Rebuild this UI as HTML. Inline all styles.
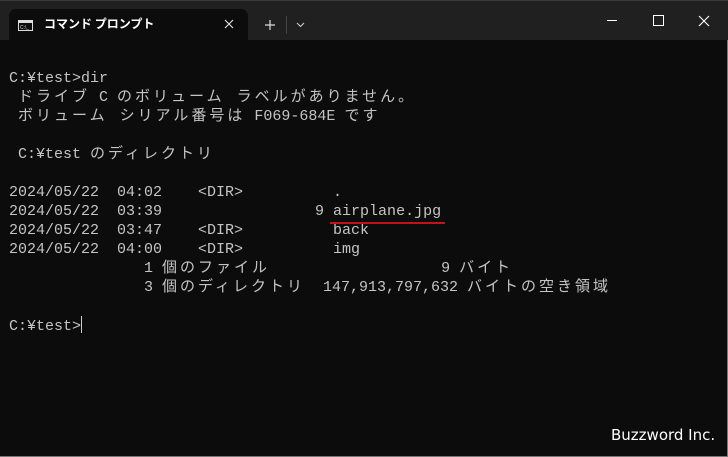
<!DOCTYPE html>
<html><head><meta charset="utf-8"><style>
body{margin:0;width:728px;height:457px;overflow:hidden;background:#202020;position:relative;font-family:"Liberation Sans","Noto Sans CJK JP",sans-serif}
.tb{position:absolute;left:0;top:0;width:728px;height:40px;background:#202020;border-top:1px solid #3a3a3a}
.tab{position:absolute;left:9px;top:9px;width:239px;height:31px;background:#0c0c0c;border-radius:7px 7px 0 0}
.body{position:absolute;left:0;top:40px;width:727px;height:416px;background:#0c0c0c;border-right:1px solid #777;border-bottom:1px solid #777}
pre{position:absolute;left:9px;top:69px;margin:0;font-family:"Liberation Mono","Noto Sans CJK JP",monospace;font-size:15px;line-height:19px;color:#c4c4c4}
.j{letter-spacing:3px}
.w{color:#fff;position:absolute}
</style></head><body>
<div class="tb"></div>
<div class="tab">
<svg style="position:absolute;left:9px;top:11px" width="15" height="11"><rect x="0.5" y="0.5" width="14" height="10" fill="none" stroke="#ddd"/><rect x="1" y="1" width="13" height="2" fill="#ddd"/><text x="2" y="9" font-size="5" fill="#ddd" font-family="Liberation Sans">C:\_</text></svg>
<div class="w" style="left:35px;top:8px;font-size:12px;font-weight:bold;font-family:'Noto Sans CJK JP',sans-serif;line-height:14px">コマンド プロンプト</div>
<svg style="position:absolute;left:215px;top:10px" width="10" height="10"><path d="M1 1L9 9M9 1L1 9" stroke="#ddd" stroke-width="1.2"/></svg>
</div>
<svg style="position:absolute;left:264px;top:19px" width="12" height="12"><path d="M6 1V11M1 6H11" stroke="#ddd" stroke-width="1.2"/></svg>
<div style="position:absolute;left:286px;top:16px;width:1px;height:18px;background:#444"></div>
<svg style="position:absolute;left:296px;top:22px" width="9" height="6"><path d="M1 1L4.5 4.5L8 1" stroke="#ccc" fill="none" stroke-width="1.1"/></svg>
<div style="position:absolute;left:607px;top:20px;width:10px;height:1px;background:#fff"></div>
<div style="position:absolute;left:653px;top:15px;width:9px;height:9px;border:1px solid #fff"></div>
<svg style="position:absolute;left:698px;top:15px" width="12" height="12"><path d="M1 1L11 11M11 1L1 11" stroke="#fff" stroke-width="1.1"/></svg>
<div class="body"></div>
<pre>C:¥test&gt;dir
 <span class="j">ドライブ</span> C <span class="j">のボリューム ラベルがありません。</span>
 <span class="j">ボリューム シリアル番号は</span> F069-684E <span class="j">です</span>

 C:¥test <span class="j">のディレクトリ</span>

2024/05/22  04:02    &lt;DIR&gt;          .
2024/05/22  03:39                 9 airplane.jpg
2024/05/22  03:47    &lt;DIR&gt;          back
2024/05/22  04:00    &lt;DIR&gt;          img
               1 <span class="j">個のファイル</span>                   9 <span class="j">バイト</span>
               3 <span class="j">個のディレクトリ</span>  147,913,797,632 <span class="j">バイトの空き領域</span>

C:¥test&gt;<span style="display:inline-block;width:1px;height:17px;background:#ccc;vertical-align:-3px"></span></pre>
<div style="position:absolute;left:330px;top:222px;width:115px;height:2px;background:#c4121a"></div>
<div class="w" style="left:611px;top:426px;font-size:15px;font-family:'DejaVu Sans',sans-serif">Buzzword Inc.</div>
</body></html>
